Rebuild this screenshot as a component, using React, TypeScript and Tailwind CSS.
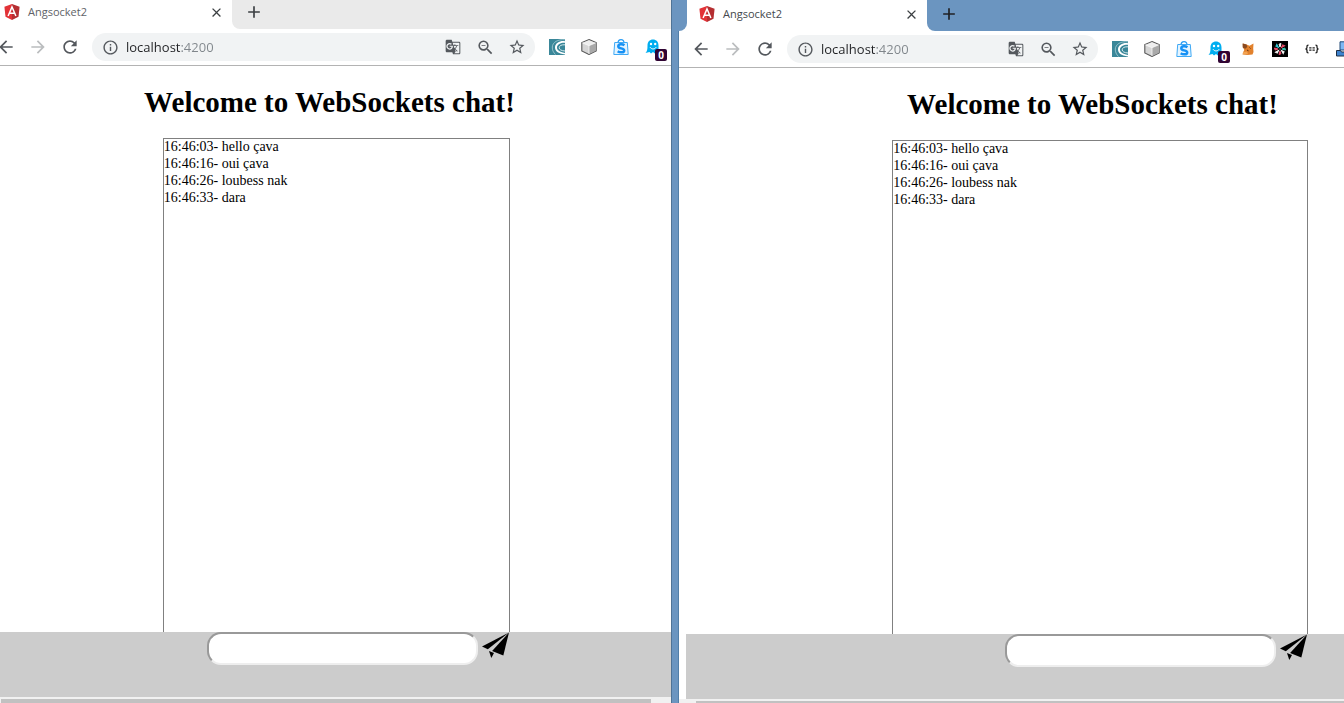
import {
  MdAdd,
  MdArrowBack,
  MdArrowForward,
  MdClose,
  MdGTranslate,
  MdInfoOutline,
  MdRefresh,
  MdStarBorder,
  MdZoomOut,
} from 'react-icons/md';

const messages = [
  { time: '16:46:03', text: 'hello çava' },
  { time: '16:46:16', text: 'oui çava' },
  { time: '16:46:26', text: 'loubess nak' },
  { time: '16:46:33', text: 'dara' },
];

function AngularLogo() {
  return (
    <svg viewBox="0 0 16 16" className="h-4 w-4 shrink-0" aria-hidden="true">
      <path d="M8 0 .4 2.7l1.1 10L8 16Z" fill="#e23237" />
      <path d="m8 0 7.6 2.7-1.1 10L8 16Z" fill="#b52e31" />
      <path d="M4.1 12 8 3l3.9 9M5.7 9.3h4.6" fill="none" stroke="#fff" strokeWidth="1.5" />
    </svg>
  );
}

function SwirlIcon() {
  return (
    <svg viewBox="0 0 16 16" className="h-4 w-4">
      <path d="M0 0h16v16H0Z" fill="#3a8799" />
      <path d="M16 .8C8.500 0 3.500 3.500 3.300 8c-.1 3 1 5.500 3.200 7.500" fill="none" stroke="#a9cfd7" strokeWidth=".8" />
      <path d="M16 2.200C11 1.500 6.200 4 6 8.300c-.1 3.600 3 6.500 10 7.200v-1.500C10.500 13.200 7.800 11 8 8.300 8.200 5.500 11.500 3.600 16 3.800Z" fill="#fff" />
      <path d="M16 5.800c-3.500-.3-5.800.9-5.800 3 0 1.800 2.300 3 5.800 3.200" fill="none" stroke="#d5e9ed" strokeWidth="1" />
    </svg>
  );
}

function CubeIcon() {
  return (
    <svg viewBox="0 0 16 16" className="h-4 w-4">
      <path d="m8 .6 7.200 3v8.400L8 15.500.8 12V3.600Z" fill="#d5d5d5" stroke="#5a5a5a" strokeWidth="1.100" />
      <path d="m8 1.200 6.500 2.700L8 6.700 1.500 3.900Z" fill="#eee" />
      <path d="m8 6.700 6.700-2.800v7.800L8 14.900Z" fill="#a9a9a9" />
      <path d="M8 6.700v8.200M1.500 3.900 8 6.700l6.500-2.800" fill="none" stroke="#f8f8f8" strokeWidth=".8" />
    </svg>
  );
}

function BagIcon() {
  return (
    <svg viewBox="0 0 16 16" className="h-4 w-4">
      <path d="M5 4c0-4.400 6-4.400 6 0" fill="none" stroke="#2a9df4" strokeWidth="1.200" />
      <path d="M1.700 3.500h12.600l.9 12H.8Z" fill="#e4f4ff" stroke="#3fa9f5" strokeWidth="1" />
      <path
        d="M11.400 6.300C9.700 5 5.300 4.700 5.300 7.400c0 2.600 5.900 1.300 5.900 4 0 2.500-4.400 2.400-6.500.9"
        fill="none"
        stroke="#1691f5"
        strokeWidth="2.500"
      />
    </svg>
  );
}

function GhostIcon() {
  return (
    <span className="relative block h-4 w-4">
      <svg viewBox="0 0 16 16" className="h-4 w-4">
        <path
          d="M2.500 6.500C2.500 2.800 4.700.5 8 .5s5.500 2.300 5.500 6V14l-2.200-1-1.500 1.500L8 13l-2 1.500L4.500 13 .5 14c1.600-1.500 2-3.500 2-7.500Z"
          fill="#00aef0"
        />
        <circle cx="6" cy="5" r="1.200" fill="#fff" />
        <circle cx="10.200" cy="5" r="1.200" fill="#fff" />
        <path d="M5 8.200c1.500 2.300 4.700 2.300 6.200 0" fill="none" stroke="#fff" />
      </svg>
      <span className="absolute top-2.5 left-2.5 flex h-3 w-3 items-center justify-center rounded-[2px] bg-[#300433] font-['Open_Sans',sans-serif] text-[10px] leading-3 font-bold text-white">
        0
      </span>
    </span>
  );
}

function FoxIcon() {
  return (
    <svg viewBox="0 0 16 16" className="h-4 w-4">
      <path d="m3 2.500 3.500 1 3 1.300 4-2.300-.3 5 .3 3.500-1 2.500-5 .5-5-.5.5-2 1.300-2.500-1.500-3Z" fill="#e2812c" />
      <path d="m2.500 2.500 4 1 .8 2.500-2 1.800-2.500-1Z" fill="#8a4a20" />
      <path d="m9.500 6.500 1 1M7 9l1.500.8" stroke="#5b3013" />
      <path d="m3 11 4-.5 1 2.700-5-.1Z" fill="#f3a452" />
    </svg>
  );
}

const petals = [
  { angle: 0, color: '#f5f5f5' },
  { angle: 45, color: '#f0506e' },
  { angle: 90, color: '#37c8b4' },
  { angle: 135, color: '#f5f5f5' },
  { angle: 180, color: '#f0506e' },
  { angle: 225, color: '#f5f5f5' },
  { angle: 270, color: '#f0506e' },
  { angle: 315, color: '#37c8d4' },
];

function FlowerIcon() {
  return (
    <svg viewBox="0 0 16 16" className="h-4 w-4">
      <path d="M0 0h16v16H0Z" fill="#000" />
      {petals.map((p) => (
        <path
          key={p.angle}
          d="M8 6 7 3.200l2-.7Z"
          fill={p.color}
          stroke={p.color}
          strokeWidth="1"
          transform={`rotate(${p.angle} 8 8)`}
        />
      ))}
    </svg>
  );
}

function BracesIcon() {
  return (
    <svg viewBox="0 0 16 16" className="h-4 w-4" fill="none" stroke="#222" strokeWidth="1.300">
      <path d="M4.500 4.200c-1.700 0-1.500.8-1.500 2S2.500 8 1.500 8c1 0 1.500.6 1.500 1.800s-.2 2 1.500 2M11.500 4.200c1.700 0 1.500.8 1.500 2S13.500 8 14.500 8c-1 0-1.500.6-1.500 1.800s.2 2-1.500 2" />
      <path d="M5.200 6.800h2.300M8.500 6.800h2.300M5.200 9.200h2.300M8.500 9.200h2.300" />
    </svg>
  );
}

function PrinterIcon() {
  return (
    <svg viewBox="0 0 16 16" className="h-4 w-4">
      <path d="M4 .8h9l1 8.200H4Z" fill="#7db8f5" stroke="#234a77" />
      <path d="M.5 9.500h4l1 1.500h5l1-1.500h4v5.500H.5Z" fill="#3e83cf" stroke="#1e2f45" />
    </svg>
  );
}

function PaperPlane() {
  return (
    <svg viewBox="0 0 27 27" className="h-[27px] w-[27px]" aria-hidden="true">
      <path d="M27 .5 0 14.500 5.800 17.300Z" />
      <path d="m27 .5-5.700 23-11.200-4.400Z" />
      <path d="m7 19 5 2-2.700 5Z" />
    </svg>
  );
}

const baseExtensions = [
  { name: 'Swirl', Icon: SwirlIcon },
  { name: 'Cube', Icon: CubeIcon },
  { name: 'Shop', Icon: BagIcon },
  { name: 'Ghost', Icon: GhostIcon },
];

const allExtensions = [
  ...baseExtensions,
  { name: 'Fox', Icon: FoxIcon },
  { name: 'Flower', Icon: FlowerIcon },
  { name: 'Braces', Icon: BracesIcon },
  { name: 'Printer', Icon: PrinterIcon },
];

function Tab({ className }: { className: string }) {
  return (
    <div className={`flex items-center bg-white pr-2 ${className}`}>
      <AngularLogo />
      <span className="ml-2 flex-1 text-[11px]">Angsocket2</span>
      <button aria-label="Close tab" className="text-[#3c4043]">
        <MdClose size={15} />
      </button>
    </div>
  );
}

function Toolbar({ className, extensions }: { className: string; extensions: typeof allExtensions }) {
  return (
    <div className={`flex h-[37px] shrink-0 items-center gap-3 border-b border-[#b3b3b3] bg-white text-[#54585d] ${className}`}>
      <button aria-label="Back"><MdArrowBack size={20} /></button>
      <button aria-label="Forward" className="text-[#bbbdbf]"><MdArrowForward size={20} /></button>
      <button aria-label="Reload"><MdRefresh size={20} /></button>
      <div className="flex h-7 min-w-0 flex-1 items-center rounded-full bg-[#f1f3f4] pr-2 pl-2.5">
        <MdInfoOutline size={17} className="shrink-0" />
        <input
          aria-label="Address"
          defaultValue="localhost:4200"
          className="ml-[7px] block min-w-0 flex-1 bg-[linear-gradient(90deg,#202124_55px,#80868b_55px)] bg-clip-text text-[13px] leading-5 text-transparent caret-black outline-none"
        />
        <div className="flex items-center gap-3">
          <button aria-label="Translate" className="flex w-5 justify-center"><MdGTranslate size={16} /></button>
          <button aria-label="Zoom" className="flex w-5 justify-center"><MdZoomOut size={19} /></button>
          <button aria-label="Bookmark" className="flex w-5 justify-center"><MdStarBorder size={18} /></button>
        </div>
      </div>
      <div className="ml-0.5 flex gap-4">
        {extensions.map(({ name, Icon }) => (
          <button key={name} aria-label={name} className="shrink-0"><Icon /></button>
        ))}
      </div>
    </div>
  );
}

function Chat({ className }: { className: string }) {
  return (
    <div className={`flex flex-1 flex-col font-['Liberation_Serif',serif] text-black ${className}`}>
      <h1 className="py-[19px] text-center text-[29px] leading-[34px] font-bold">Welcome to WebSockets chat!</h1>
      <ul className="ml-[calc(25%+3px)] w-[51.1%] flex-1 border border-b-0 border-[#808080] text-[14px] leading-4">
        {messages.map((m) => (
          <li key={m.time} className="pb-px">{m.time}- {m.text}</li>
        ))}
      </ul>
      <form className="-mr-0.5 h-[65px] bg-[#ccc] pr-0.5" onSubmit={(e) => e.preventDefault()}>
        <div className="ml-[calc(25%+3px)] flex w-[51.1%] items-start justify-end gap-1 pr-px">
          <input
            type="text"
            aria-label="Message"
            className="h-[33px] w-[271px] rounded-[14px] border-2 border-t-[#999] border-r-[#eee] border-b-[#eee] border-l-[#999] bg-white px-2 outline-none"
          />
          <button aria-label="Send"><PaperPlane /></button>
        </div>
      </form>
    </div>
  );
}

export default function App() {
  return (
    <div className="flex h-screen overflow-hidden bg-white font-['Open_Sans',sans-serif]">
      <section className="flex w-1/2 min-w-0 flex-col overflow-hidden border-r border-[#4f7396]">
        <div className="flex h-[29px] shrink-0 bg-white">
          <Tab className="w-[232px] pb-[5px] pl-1 text-[#5f6368]" />
          <div className="flex flex-1 items-center rounded-bl-lg bg-[#eaeaea] pb-[5px] pl-3 text-[#3c4043]">
            <button aria-label="New tab"><MdAdd size={20} /></button>
          </div>
        </div>
        <Toolbar className="-ml-1 pr-2.5" extensions={baseExtensions} />
        <Chat className="-ml-2.5 w-[calc(100%+8px)]" />
        <div className="h-1.5 shrink-0 bg-[#f1f1f1] pt-0.5 pr-5 pl-px">
          <div className="h-full bg-[#c1c1c1]" />
        </div>
      </section>
      <section className="flex min-w-0 flex-1 flex-col overflow-hidden border-l-[6px] border-[#6b95c0]">
        <div className="flex h-[31px] shrink-0 border-l border-[#6b95c0] bg-white">
          <div className="w-2 rounded-br-lg bg-[#6b95c0]" />
          <Tab className="w-[240px] rounded-t-sm pb-[3px] pl-3 text-[#45494d]" />
          <div className="flex flex-1 items-center rounded-bl-lg bg-[#6b95c0] pb-[3px] pl-3 text-[#202124]">
            <button aria-label="New tab"><MdAdd size={20} /></button>
          </div>
        </div>
        <div className="flex flex-1 flex-col border-l border-[#527fa9]">
          <Toolbar className="-mr-2 pl-3" extensions={allExtensions} />
          <Chat className="ml-[7px] w-[calc(100%+148px)]" />
          <div className="h-1 shrink-0 bg-[#f1f1f1] pt-0.5 pl-[17px]">
            <div className="h-full bg-[#c1c1c1]" />
          </div>
        </div>
      </section>
    </div>
  );
}
